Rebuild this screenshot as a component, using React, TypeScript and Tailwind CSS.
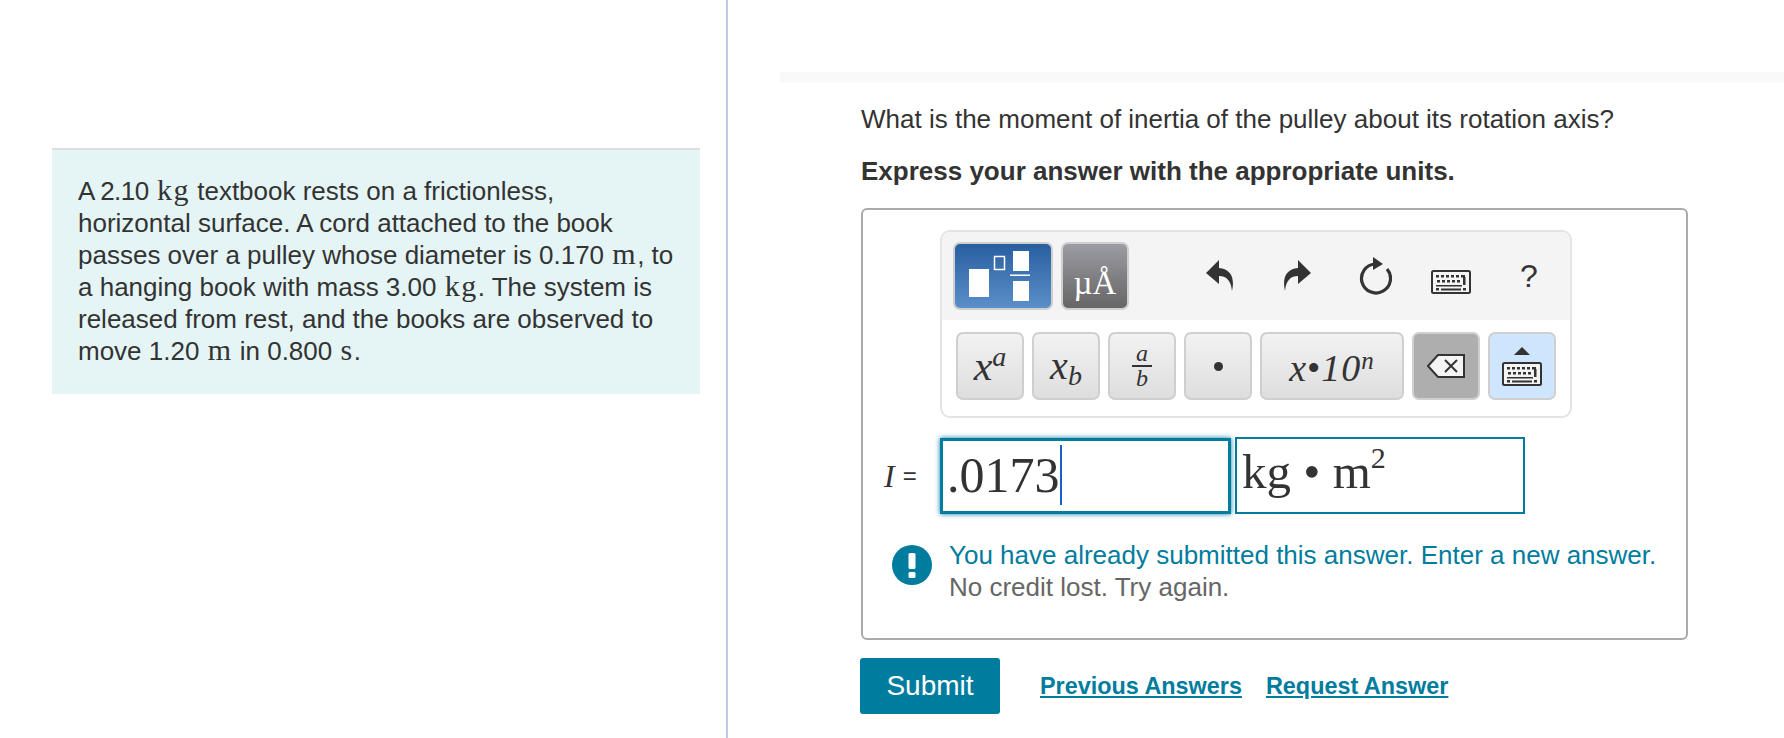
import React from "react";

const KeyboardIcon = ({ className }: { className?: string }) => (
  <svg viewBox="0 0 40 24" className={className}>
    <rect x="1" y="1" width="38" height="22" rx="1.5" fill="#f4f4f4" stroke="#333" strokeWidth="2" />
    <g fill="#333">
      <rect x="5" y="5" width="3" height="2.5" />
      <rect x="10" y="5" width="3" height="2.5" />
      <rect x="15" y="5" width="3" height="2.5" />
      <rect x="20" y="5" width="3" height="2.5" />
      <rect x="25" y="5" width="3" height="2.5" />
      <rect x="30" y="5" width="4" height="2.5" />
      <rect x="6" y="10" width="3" height="2.5" />
      <rect x="11" y="10" width="3" height="2.5" />
      <rect x="16" y="10" width="3" height="2.5" />
      <rect x="21" y="10" width="3" height="2.5" />
      <rect x="26" y="10" width="3" height="2.5" />
      <rect x="32" y="7" width="2.5" height="8" />
      <rect x="5" y="15" width="26" height="1.5" />
      <rect x="5" y="18" width="3" height="2.5" />
      <rect x="10" y="18.5" width="20" height="2" />
      <rect x="32" y="18" width="3" height="2.5" />
    </g>
  </svg>
);

const mathButton =
  "flex h-[68px] w-[68px] items-center justify-center rounded-[7px] border-2 border-[#cfcfcf] bg-gradient-to-b from-[#f2f2f2] to-[#dedede] font-['Liberation_Serif',serif] italic text-[#333]";

const Sans = "font-['Liberation_Sans',Arial,sans-serif]";
const TeX = "ml-[1px] font-['Liberation_Serif',serif] text-[30px] leading-none tracking-[1.5px]";

const App: React.FC = () => {
  return (
    <div className={`flex h-[738px] w-[1784px] overflow-hidden bg-white text-[26px] leading-[32px] text-[#333] ${Sans}`}>
      {/* problem statement */}
      <div className="h-full w-[728px] shrink-0 border-r-2 border-[#b9cde5] pl-[52px] pr-[26px] pt-[148px]">
        <div className="h-[246px] border-t-2 border-[#dddddd] bg-[#e5f5f6] pl-[26px] pr-[20px] pt-[25px]">
          <p className="m-0 whitespace-nowrap">
            <span className="tracking-[-0.5px]">A 2.10</span> <span className={TeX}>kg</span> textbook rests on a frictionless,
            <br />
            horizontal surface. A cord attached to the book
            <br />
            passes over a pulley whose diameter is 0.170 <span className={TeX}>m</span>, to
            <br />
            a hanging book with mass 3.00 <span className={TeX}>kg</span>. The system is
            <br />
            released from rest, and the books are observed to
            <br />
            move 1.20 <span className={TeX}>m</span> in 0.800 <span className={TeX}>s</span>.
          </p>
        </div>
      </div>

      {/* answer part */}
      <div className="flex-1 pl-[52px] pt-[72px]">
        <div className="h-[11px] bg-[#f9f9f9]" />
        <div className="pl-[81px] pt-[20px]">
          <p className="m-0">What is the moment of inertia of the pulley about its rotation axis?</p>
          <p className="m-0 mt-[20px] font-bold">Express your answer with the appropriate units.</p>

          <div className="mt-[21px] h-[432px] w-[827px] rounded-[6px] border-2 border-[#aaaaaa] pl-[77px] pt-[20px]">
            {/* toolbar */}
            <div className="h-[188px] w-[632px] overflow-hidden rounded-[10px] border-2 border-[#e4e4e4]">
              <div className="flex h-[88px] items-center bg-[#f4f4f4] pl-[11px]">
                <div className="flex h-[68px] w-[100px] items-center justify-center rounded-[7px] border-2 border-[#cfcfcf] bg-gradient-to-b from-[#285f9f] to-[#5b8fca]">
                  <svg viewBox="0 0 61 50" className="mr-[7px] h-[50px] w-[61px]">
                    <rect x="0" y="18" width="20" height="28" fill="#fff" />
                    <rect x="25.5" y="5.5" width="10" height="13" fill="none" stroke="#fff" strokeWidth="1.5" />
                    <rect x="44" y="0" width="16" height="20" fill="#fff" />
                    <rect x="41" y="23.5" width="20" height="1.5" fill="#fff" />
                    <rect x="44" y="30" width="16" height="20" fill="#fff" />
                  </svg>
                </div>
                <div className="ml-[8px] flex h-[68px] w-[68px] items-end justify-center rounded-[7px] border-2 border-[#cfcfcf] bg-gradient-to-b from-[#9c9ca4] to-[#666666] pb-[5px] font-['Liberation_Serif',serif] text-[33px] leading-[40px] text-white">
                  µÅ
                </div>
                <svg viewBox="0 0 28 32" className="ml-[77px] h-[32px] w-[28px]" fill="#333">
                  <path d="M13 0 L0 13 L13 24 L13 16 C20 16 25 20 26 31 C29 18 25 9 13 8 Z" />
                </svg>
                <svg viewBox="0 0 28 32" className="ml-[49px] h-[32px] w-[28px]" fill="#333">
                  <path d="M15 0 L28 13 L15 24 L15 16 C8 16 3 20 2 31 C-1 18 3 9 15 8 Z" />
                </svg>
                <svg viewBox="0 0 34 38" className="ml-[47px] h-[38px] w-[34px]" fill="none">
                  <path d="M17 7 A14.5 14.5 0 1 0 29 12" stroke="#333" strokeWidth="3.2" />
                  <path d="M15 0 L25 7 L15 13 Z" fill="#333" />
                </svg>
                <KeyboardIcon className="ml-[39px] mt-[12px] h-[24px] w-[40px]" />
                <span className="ml-[49px] -mt-[1px] text-[32px] leading-[40px] text-[#333]">?</span>
              </div>
              {/* math buttons */}
              <div className="flex gap-[8px] pl-[14px] pt-[12px]">
                <div className={`${mathButton} text-[42px] leading-none`}>
                  <span>
                    x<sup className="-top-[14px] text-[28px] leading-none">a</sup>
                  </span>
                </div>
                <div className={`${mathButton} text-[40px] leading-none`}>
                  <span>
                    x<sub className="-bottom-[6px] text-[28px] leading-none">b</sub>
                  </span>
                </div>
                <div className={`${mathButton} flex-col text-[24px] leading-[23px]`}>
                  <span>a</span>
                  <span className="h-[2px] w-[20px] bg-[#333]" />
                  <span>b</span>
                </div>
                <div className={mathButton}>
                  <span className="h-[9px] w-[9px] rounded-full bg-[#333]" />
                </div>
                <div className={`${mathButton} w-[144px] pt-[4px] text-[38px] leading-none tracking-[1px]`}>
                  <span>
                    x<span className="not-italic">•</span>10<sup className="-top-[12px] text-[25px] leading-none">n</sup>
                  </span>
                </div>
                <div className="flex h-[68px] w-[68px] items-center justify-center rounded-[7px] border-2 border-[#cfcfcf] bg-[#aeaeae]">
                  <svg viewBox="0 0 38 24" className="h-[24px] w-[38px]" fill="none" stroke="#333">
                    <path d="M37 1 H11 L1 12 L11 23 H37 Z" fill="#f4f4f4" strokeWidth="2" />
                    <path d="M18 6 L30 18 M30 6 L18 18" strokeWidth="2" />
                  </svg>
                </div>
                <div className="flex h-[68px] w-[68px] flex-col items-center justify-center gap-[7px] rounded-[7px] border-2 border-[#cfcfcf] bg-[#cde6fd]">
                  <span className="h-0 w-0 border-x-[8px] border-b-[8px] border-x-transparent border-b-[#333]" />
                  <KeyboardIcon className="h-[24px] w-[40px]" />
                </div>
              </div>
            </div>

            {/* answer inputs */}
            <div className="-ml-[69px] mt-[19px] flex items-center">
              <span className="flex w-[69px] items-center gap-[8px] whitespace-nowrap pl-[13px] text-[24px]">
                <i className="font-['Liberation_Serif',serif] text-[32px]">I</i>
                <span>=</span>
              </span>
              <div className="flex h-[76px] w-[291px] items-center border-[3px] border-[#007c9e] pb-[2px] pl-[4px] font-['Liberation_Serif',serif] text-[50px] shadow-[0_0_5px_#007c9e]">
                .0173<span className="h-[60px] w-[2px] bg-[#1a5fd0]" />
              </div>
              <div className="ml-[4px] flex h-[77px] w-[290px] items-center border-2 border-[#007c9e] pb-[2px] pl-[5px] font-['Liberation_Serif',serif] text-[49px]">
                <span>
                  kg • m<sup className="-top-[20px] text-[30px] leading-none">2</sup>
                </span>
              </div>
            </div>

            {/* feedback */}
            <div className="-ml-[48px] mt-[25px] flex gap-[17px]">
              <svg viewBox="0 0 40 40" className="mt-[6px] h-[40px] w-[40px] shrink-0">
                <circle cx="20" cy="20" r="20" fill="#007c9e" />
                <rect x="16.5" y="8" width="7" height="16" rx="1.5" fill="#fff" />
                <rect x="16.5" y="27" width="7" height="6" rx="1.5" fill="#fff" />
              </svg>
              <div>
                <div className="text-[#007c9e]">You have already submitted this answer. Enter a new answer.</div>
                <div className="text-[#666666]">No credit lost. Try again.</div>
              </div>
            </div>
          </div>

          {/* actions */}
          <div className="-ml-px mt-[18px] flex items-center">
            <button className="h-[56px] w-[140px] rounded-[3px] bg-[#007c9e] text-[28px] text-white">Submit</button>
            <a className="ml-[40px] text-[23.4px] font-bold text-[#007c9e] underline" href="#">
              Previous Answers
            </a>
            <a className="ml-[24px] text-[23.4px] font-bold text-[#007c9e] underline" href="#">
              Request Answer
            </a>
          </div>
        </div>
      </div>
    </div>
  );
};

export default App;
